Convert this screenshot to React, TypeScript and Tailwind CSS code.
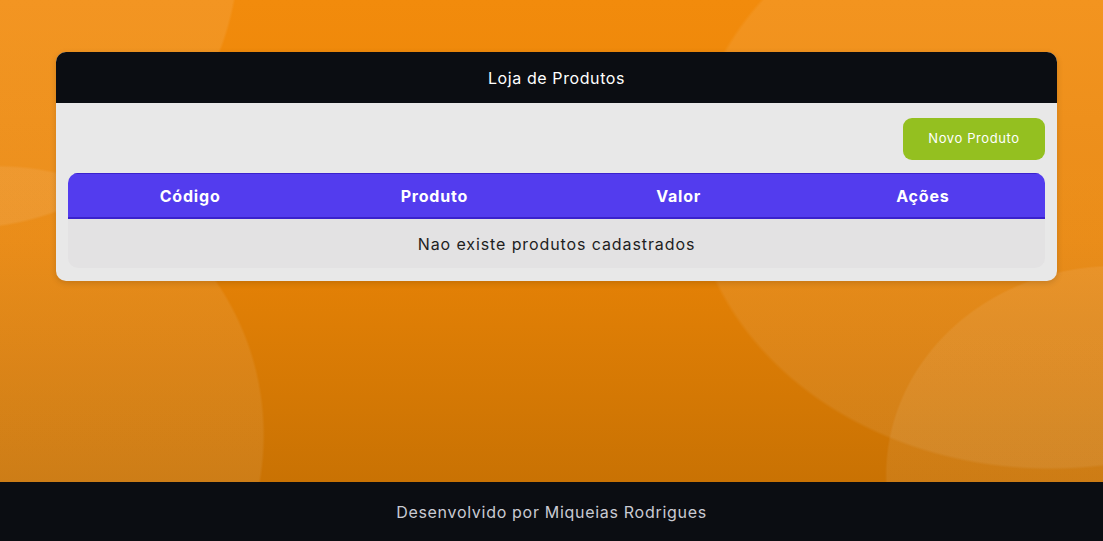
export default function App() {
  const cols = ["Código", "Produto", "Valor", "Ações"]

  return (
    <div className="min-h-screen flex flex-col font-['Inter',sans-serif]">
      {/* orange backdrop with soft bubbles */}
      <main className="h-[482px] pt-[52px] bg-[radial-gradient(circle_280px_at_-40px_-50px,rgba(255,255,255,0.09)_99%,transparent_100%),radial-gradient(ellipse_267px_270px_at_-2px_435px,rgba(255,255,255,0.08)_99%,transparent_100%),radial-gradient(ellipse_360px_295px_at_1050px_175px,rgba(255,255,255,0.08)_99%,transparent_100%),radial-gradient(ellipse_230px_210px_at_1115px_475px,rgba(255,255,255,0.07)_99%,transparent_100%),linear-gradient(to_bottom,#f28b0c,#e88306_50%,#c97203)]">
        <section className="ml-[56px] w-[1001px] overflow-hidden rounded-[10px] bg-[#e8e8e8] shadow-[0_2px_6px_rgba(0,0,0,0.15)]">
          <header className="flex h-[51px] items-center justify-center bg-[#0b0d12] text-[16px] tracking-[0.6px] text-white">
            Loja de Produtos
          </header>

          <div className="px-[12px] pb-[13px]">
            <div className="flex justify-end pt-[15px] pb-[13px]">
              <button className="h-[42px] w-[142px] rounded-[9px] bg-[#94c020] text-[13px] tracking-[0.6px] text-white">
                Novo Produto
              </button>
            </div>

            <div className="overflow-hidden rounded-[10px]">
              <div className="grid h-[46px] grid-cols-4 items-center border-t border-b-2 border-[#3a22cc] bg-[#533cee] text-[16px] font-bold tracking-[0.8px] text-white">
                {cols.map((c) => (
                  <div key={c} className="text-center">
                    {c}
                  </div>
                ))}
              </div>
              <div className="flex h-[49px] items-center justify-center bg-[#e3e2e3] text-[16px] tracking-[0.9px] text-[#1e1e1e]">
                Nao existe produtos cadastrados
              </div>
            </div>
          </div>
        </section>
      </main>

      <footer className="flex h-[59px] items-center justify-center bg-[#0b0d12] text-[16px] tracking-[0.7px] text-[#c9cad2]">
        Desenvolvido por Miqueias Rodrigues
      </footer>
    </div>
  )
}
